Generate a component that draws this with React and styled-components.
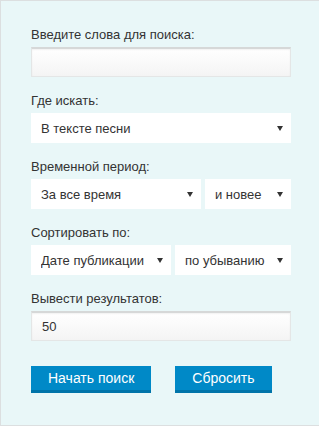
import React from 'react';
import styled, { createGlobalStyle } from 'styled-components';

const GlobalStyle = createGlobalStyle`
  html, body {
    margin: 0;
    padding: 0;
    background: #ffffff;
  }
  * {
    box-sizing: border-box;
  }
`;

const Panel = styled.form`
  width: 319px;
  height: 426px;
  background: #e9f7f8;
  border: 1px solid #dcdfe0;
  border-right: none;
  padding: 26px 28px 0 30px;
  font-family: "Liberation Sans", Arial, sans-serif;
  color: #333;
  display: flex;
  flex-direction: column;
  gap: 16px;
`;

const Field = styled.div`
  display: flex;
  flex-direction: column;
  gap: 5px;
`;

const Label = styled.label`
  font-size: 13px;
  line-height: 15px;
  color: #333;
`;

const TextInput = styled.input`
  width: 100%;
  height: 30px;
  margin: 0;
  padding: 0 10px;
  border: 1px solid #e4e6e6;
  border-top: 2px solid #d6d8d8;
  background: linear-gradient(#ffffff, #f4f4f4);
  box-shadow: inset 0 1px 2px rgba(0, 0, 0, 0.06);
  font-family: inherit;
  font-size: 13px;
  color: #333;
  outline: none;
`;

const Row = styled.div`
  display: grid;
  grid-template-columns: ${({ $cols }) => $cols};
  gap: 4px;
`;

const SelectWrap = styled.div`
  position: relative;
  height: 30px;
`;

const Select = styled.select`
  appearance: none;
  -webkit-appearance: none;
  width: 100%;
  height: 30px;
  margin: 0;
  padding: 0 20px 0 10px;
  border: none;
  border-radius: 0;
  background: #ffffff;
  font-family: inherit;
  font-size: 13px;
  color: #333;
  outline: none;
`;

const Arrow = styled.svg`
  position: absolute;
  right: 8px;
  top: 13px;
  pointer-events: none;
`;

const Buttons = styled.div`
  display: flex;
  gap: 24px;
  margin-top: 9px;
`;

const Button = styled.button`
  height: 27px;
  margin: 0;
  padding: 0 ${({ $pad }) => $pad}px 0;
  border: none;
  border-bottom: 3px solid #0074a9;
  border-radius: 0;
  background: #0089c7;
  color: #ffffff;
  font-family: inherit;
  font-size: 14px;
  line-height: 24px;
  cursor: pointer;
`;

function Dropdown({ value, options }) {
  return (
    <SelectWrap>
      <Select defaultValue={value}>
        {options.map((o) => (
          <option key={o}>{o}</option>
        ))}
      </Select>
      <Arrow width="6" height="5" viewBox="0 0 6 5">
        <path d="M0 0H6L3 5Z" fill="#333" />
      </Arrow>
    </SelectWrap>
  );
}

export default function App() {
  return (
    <>
      <GlobalStyle />
      <Panel onSubmit={(e) => e.preventDefault()}>
        <Field>
          <Label>Введите слова для поиска:</Label>
          <TextInput type="text" />
        </Field>
        <Field>
          <Label>Где искать:</Label>
          <Dropdown value="В тексте песни" options={['В тексте песни', 'В названии', 'В исполнителе']} />
        </Field>
        <Field>
          <Label>Временной период:</Label>
          <Row $cols="170px 86px">
            <Dropdown value="За все время" options={['За все время', 'За год', 'За месяц']} />
            <Dropdown value="и новее" options={['и новее', 'и старше']} />
          </Row>
        </Field>
        <Field>
          <Label>Сортировать по:</Label>
          <Row $cols="140px 116px">
            <Dropdown value="Дате публикации" options={['Дате публикации', 'Рейтингу']} />
            <Dropdown value="по убыванию" options={['по убыванию', 'по возрастанию']} />
          </Row>
        </Field>
        <Field>
          <Label>Вывести результатов:</Label>
          <TextInput type="text" defaultValue="50" />
        </Field>
        <Buttons>
          <Button type="submit" $pad={17}>Начать поиск</Button>
          <Button type="reset" $pad={17}>Сбросить</Button>
        </Buttons>
      </Panel>
    </>
  );
}
